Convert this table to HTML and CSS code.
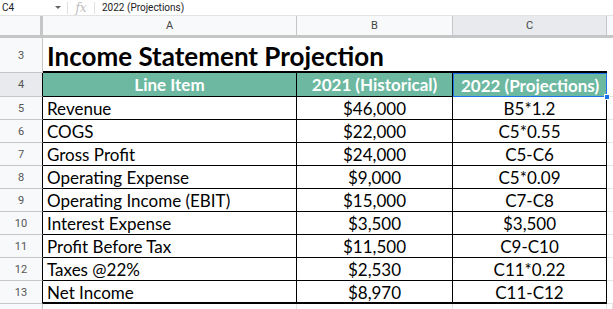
FILE: index.html
```html
<!DOCTYPE html>
<html>
<head>
<meta charset="utf-8">
<link rel="stylesheet" href="styles.css">
</head>
<body>
<div class="fbar">
  <div class="namebox">C4</div>
  <div class="caret"></div>
  <div class="sep"></div>
  <div class="fx">fx</div>
  <div class="sep"></div>
  <div class="ftext">2022 (Projections)</div>
</div>
<div class="sheet">
  <div class="hd corner"></div>
  <div class="hd col">A</div>
  <div class="hd col">B</div>
  <div class="hd col selcol">C</div>
  <div class="hd col last"></div>

  <div class="rh r3">3</div>
  <div class="title">Income Statement Projection</div>
  <div class="empty r3"></div>

  <div class="rh r4 selrow">4</div>
  <div class="th first">Line Item</div>
  <div class="th">2021 (Historical)</div>
  <div class="th active">2022 (Projections)<span class="handle"></span></div>
  <div class="empty r4"></div>

  <div class="rh">5</div><div class="c l">Revenue</div><div class="c">$46,000</div><div class="c">B5*1.2</div><div class="empty"></div>
  <div class="rh">6</div><div class="c l">COGS</div><div class="c">$22,000</div><div class="c">C5*0.55</div><div class="empty"></div>
  <div class="rh">7</div><div class="c l">Gross Profit</div><div class="c">$24,000</div><div class="c">C5-C6</div><div class="empty"></div>
  <div class="rh">8</div><div class="c l">Operating Expense</div><div class="c">$9,000</div><div class="c">C5*0.09</div><div class="empty"></div>
  <div class="rh">9</div><div class="c l">Operating Income (EBIT)</div><div class="c">$15,000</div><div class="c">C7-C8</div><div class="empty"></div>
  <div class="rh">10</div><div class="c l">Interest Expense</div><div class="c">$3,500</div><div class="c">$3,500</div><div class="empty"></div>
  <div class="rh">11</div><div class="c l">Profit Before Tax</div><div class="c">$11,500</div><div class="c">C9-C10</div><div class="empty"></div>
  <div class="rh">12</div><div class="c l">Taxes @22%</div><div class="c">$2,530</div><div class="c">C11*0.22</div><div class="empty"></div>
  <div class="rh">13</div><div class="c l lastrow">Net Income</div><div class="c lastrow">$8,970</div><div class="c lastrow">C11-C12</div><div class="empty"></div>

  <div class="rh r14"></div><div class="r14 blank"></div><div class="r14 blank"></div><div class="r14 blank"></div><div class="r14 blank"></div>
</div>
</body>
</html>
```
FILE: styles.css
```css
* { box-sizing: border-box; }
body {
  margin: 0;
  background: #fff;
  font-family: Roboto, "Liberation Sans", Arial, sans-serif;
  width: 613px;
  height: 309px;
  overflow: hidden;
}
.fbar {
  height: 16px;
  display: flex;
  align-items: center;
  border-bottom: 1px solid #e2e3e3;
  font-size: 10px;
  color: #202124;
}
.namebox { width: 55px; padding-left: 2px; }
.caret {
  width: 0; height: 0;
  border-left: 3px solid transparent;
  border-right: 3px solid transparent;
  border-top: 3px solid #5f6368;
  margin-right: 6px;
}
.sep { width: 1px; height: 12px; background: #e0e0e0; }
.fx {
  font-family: "DejaVu Serif", "Liberation Serif", serif;
  font-style: italic;
  color: #bdbdbd;
  font-size: 12px;
  width: 26px;
  text-align: center;
}
.ftext { padding-left: 7px; }

.sheet {
  display: grid;
  grid-template-columns: 43px 254px 156px 154px 6px;
  grid-template-rows: 22px 35px 24px repeat(9, 23px) 6px;
  font-family: Lato, "Open Sans", sans-serif;
  font-size: 17px;
  color: #000;
}
.hd {
  background: #f8f9fa;
  border-right: 1px solid #c4c7c5;
  border-bottom: 3px solid #c4c7c5;
  font-family: Roboto, "Liberation Sans", Arial, sans-serif;
  font-size: 11px;
  color: #444;
  display: flex;
  align-items: center;
  justify-content: center;
}
.corner { border-right: 3px solid #c4c7c5; }
.selcol { background: #e8eaed; }
.hd.last { border-right: none; }

.rh {
  background: #f8f9fa;
  border-right: 1px solid #000;
  border-bottom: 1px solid #c4c7c5;
  font-family: Roboto, "Liberation Sans", Arial, sans-serif;
  font-size: 11px;
  color: #555;
  display: flex;
  align-items: center;
  justify-content: center;
}
.rh.r3, .rh.r14 { border-right-color: #c4c7c5; }
.selrow { background: #e8eaed; }

.title {
  grid-column: 2 / span 3;
  font-weight: 700;
  font-size: 26px;
  padding-left: 4px;
  display: flex;
  align-items: center;
  border-bottom: 2px solid #000;
  padding-top: 3px;
}
.empty { border-bottom: 1px solid #e2e3e3; }
.empty.r3 { border-bottom: none; }

.th {
  background: #6cb8a0;
  color: #fff;
  font-weight: 700;
  display: flex;
  align-items: center;
  justify-content: center;
  border-right: 1px solid #000;
  border-bottom: 1px solid #000;
  position: relative;
}
.th.active {
  border: 1px solid #1a73e8;
}
.handle {
  position: absolute;
  right: -4px;
  bottom: -4px;
  width: 6px;
  height: 6px;
  background: #1a73e8;
  border: 1px solid #fff;
}

.c {
  display: flex;
  align-items: center;
  justify-content: center;
  border-right: 1px solid #000;
  border-bottom: 1px solid #000;
  padding-top: 1px;
}
.c.l { justify-content: flex-start; padding-left: 4px; }
.c.lastrow { border-bottom: 2px solid #000; }
.r14.blank { border-right: 1px solid #e2e3e3; }
.rh.r14 { border-bottom: none; }
```
